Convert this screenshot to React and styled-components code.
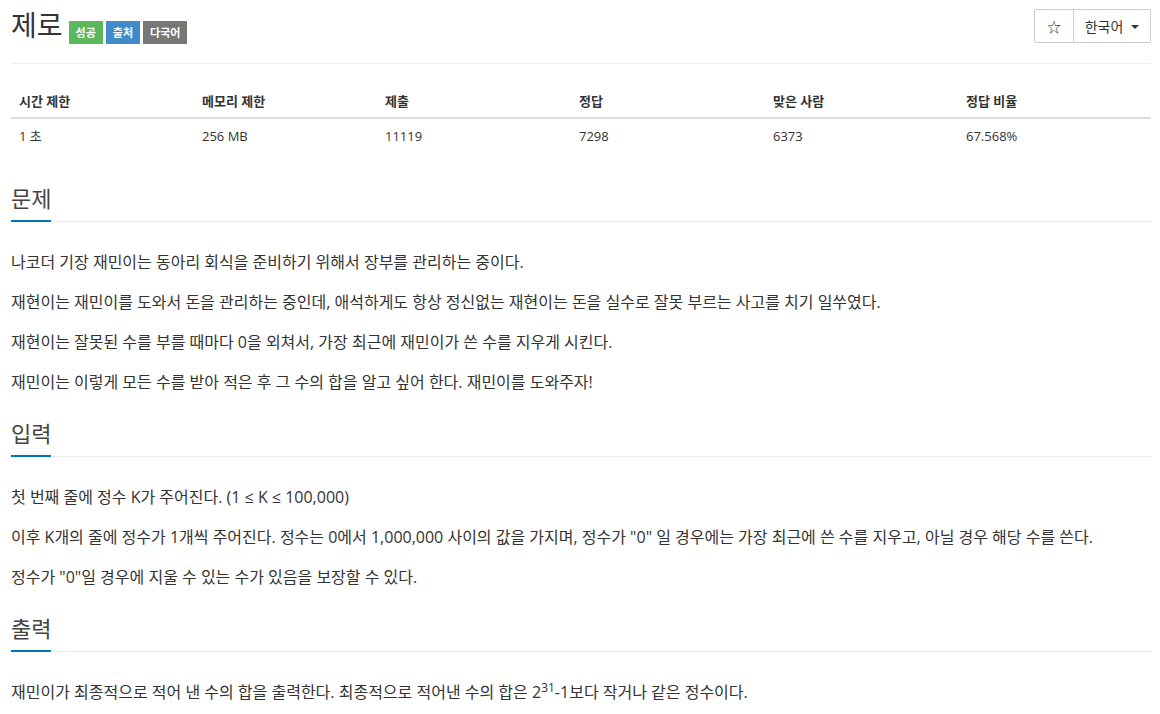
import React from 'react';
import styled, { createGlobalStyle } from 'styled-components';

const GlobalStyle = createGlobalStyle`
  body {
    margin: 0;
    background: #fff;
    color: #333;
    font-family: "Open Sans", "Noto Sans CJK KR", sans-serif;
    font-size: 14px;
  }
`;

const stats = {
  heads: ['시간 제한', '메모리 제한', '제출', '정답', '맞은 사람', '정답 비율'],
  values: ['1 초', '256 MB', '11119', '7298', '6373', '67.568%'],
  widths: [183, 183, 194, 194, 193, 193],
};

const sections = [
  {
    title: '문제',
    lines: [
      '나코더 기장 재민이는 동아리 회식을 준비하기 위해서 장부를 관리하는 중이다.',
      '재현이는 재민이를 도와서 돈을 관리하는 중인데, 애석하게도 항상 정신없는 재현이는 돈을 실수로 잘못 부르는 사고를 치기 일쑤였다.',
      '재현이는 잘못된 수를 부를 때마다 0을 외쳐서, 가장 최근에 재민이가 쓴 수를 지우게 시킨다.',
      '재민이는 이렇게 모든 수를 받아 적은 후 그 수의 합을 알고 싶어 한다. 재민이를 도와주자!',
    ],
  },
  {
    title: '입력',
    lines: [
      '첫 번째 줄에 정수 K가 주어진다. (1 ≤ K ≤ 100,000)',
      '이후 K개의 줄에 정수가 1개씩 주어진다. 정수는 0에서 1,000,000 사이의 값을 가지며, 정수가 "0" 일 경우에는 가장 최근에 쓴 수를 지우고, 아닐 경우 해당 수를 쓴다.',
      '정수가 "0"일 경우에 지울 수 있는 수가 있음을 보장할 수 있다.',
    ],
  },
];

const App = () => {
  return (
    <Page>
      <GlobalStyle />
      <Header>
        <Title>제로</Title>
        <Labels>
          <Label color="#5cb85c">성공</Label>
          <Label color="#428bca">출처</Label>
          <Label color="#777777">다국어</Label>
        </Labels>
        <ButtonGroup>
          <Button>☆</Button>
          <Button wide>
            한국어 <Caret />
          </Button>
        </ButtonGroup>
      </Header>

      <StatsTable>
        <colgroup>
          {stats.widths.map((w, i) => (
            <col key={i} style={{ width: w }} />
          ))}
        </colgroup>
        <thead>
          <tr>
            {stats.heads.map((h) => (
              <Th key={h}>{h}</Th>
            ))}
          </tr>
        </thead>
        <tbody>
          <tr>
            {stats.values.map((v) => (
              <Td key={v}>{v}</Td>
            ))}
          </tr>
        </tbody>
      </StatsTable>

      {sections.map((s) => (
        <Section key={s.title}>
          <Headline>
            <Heading>{s.title}</Heading>
          </Headline>
          {s.lines.map((line) => (
            <Para key={line}>{line}</Para>
          ))}
        </Section>
      ))}

      <Section>
        <Headline>
          <Heading>출력</Heading>
        </Headline>
        <Para>
          재민이가 최종적으로 적어 낸 수의 합을 출력한다. 최종적으로 적어낸 수의 합은 2<sup>31</sup>-1보다 작거나 같은 정수이다.
        </Para>
      </Section>
    </Page>
  );
};

const Page = styled.div`
  padding: 0 9px 0 11px;
`;

const Header = styled.div`
  display: flex;
  align-items: flex-start;
  padding-top: 9px;
  height: 54px;
  border-bottom: 1px solid #eee;
`;

const Title = styled.h1`
  margin: 1px 0 0;
  font-size: 28px;
  font-weight: 400;
  line-height: 30px;
  color: #333;
`;

const Labels = styled.div`
  display: flex;
  gap: 3px;
  margin: 12px 0 0 6px;
`;

const Label = styled.span`
  display: inline-block;
  height: 23px;
  line-height: 23px;
  padding: 0 7px;
  background: ${(p) => p.color};
  color: #fff;
  font-size: 11px;
  font-weight: 700;
`;

const ButtonGroup = styled.div`
  display: flex;
  margin-left: auto;
  border: 1px solid #ccc;
  border-radius: 2px;
  height: 32px;
`;

const Button = styled.div`
  display: flex;
  align-items: center;
  justify-content: center;
  gap: 8px;
  width: ${(p) => (p.wide ? '76px' : '38px')};
  font-size: 14px;
  color: #333;
  & + & {
    border-left: 1px solid #ccc;
  }
`;

const Caret = styled.span`
  display: inline-block;
  width: 0;
  height: 0;
  margin-top: 2px;
  border-top: 4px solid #333;
  border-left: 4px solid transparent;
  border-right: 4px solid transparent;
`;

const StatsTable = styled.table`
  width: 100%;
  table-layout: fixed;
  border-collapse: collapse;
  margin: 19px 0 22px;
  font-size: 13px;
`;

const Th = styled.th`
  text-align: left;
  font-weight: 700;
  padding: 8px 8px 6px;
  line-height: 20px;
  border-bottom: 2px solid #ddd;
`;

const Td = styled.td`
  padding: 7px 8px;
  line-height: 20px;
`;

const Section = styled.section`
  padding-top: 11px;
`;

const Headline = styled.div`
  border-bottom: 1px dotted #ddd;
  margin-bottom: 28px;
`;

const Heading = styled.h2`
  display: inline-block;
  margin: 0 0 -1px;
  padding-bottom: 10px;
  font-size: 22px;
  font-weight: 400;
  line-height: 24px;
  color: #444;
  border-bottom: 2px solid #0076c0;
`;

const Para = styled.p`
  margin: 0 0 16px;
  font-size: 16px;
  line-height: 24px;
  color: #333;

  sup {
    font-size: 12px;
    line-height: 0;
    vertical-align: 6px;
  }
`;

export default App;
